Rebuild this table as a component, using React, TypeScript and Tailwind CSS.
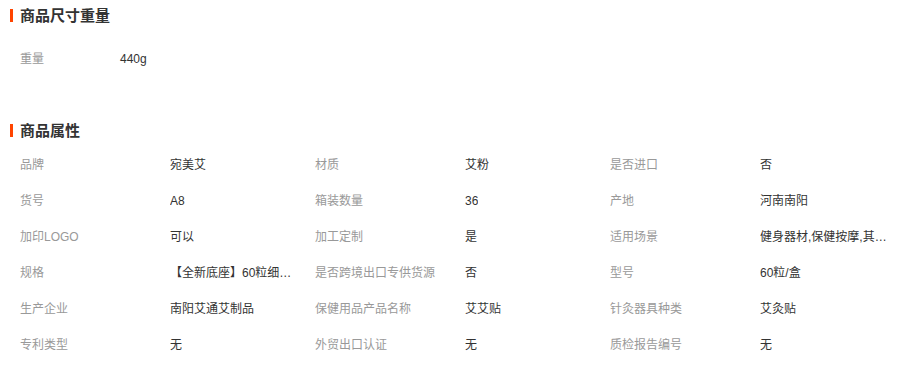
const SIZE_ROWS: [string, string][] = [["重量", "440g"]];

const ATTRS: [string, string][] = [
  ["品牌", "宛美艾"],
  ["材质", "艾粉"],
  ["是否进口", "否"],
  ["货号", "A8"],
  ["箱装数量", "36"],
  ["产地", "河南南阳"],
  ["加印LOGO", "可以"],
  ["加工定制", "是"],
  ["适用场景", "健身器材,保健按摩,其他场景"],
  ["规格", "【全新底座】60粒细艾绒"],
  ["是否跨境出口专供货源", "否"],
  ["型号", "60粒/盒"],
  ["生产企业", "南阳艾通艾制品"],
  ["保健用品产品名称", "艾艾贴"],
  ["针灸器具种类", "艾灸贴"],
  ["专利类型", "无"],
  ["外贸出口认证", "无"],
  ["质检报告编号", "无"],
];

function SectionTitle({ title }: { title: string }) {
  return (
    <div className="flex h-[30px] items-center">
      <span className="ml-[10px] h-[13px] w-[3px] bg-[#ff4400]" />
      <h3 className="ml-[7px] text-[15px] font-bold leading-none text-[#333]">{title}</h3>
    </div>
  );
}

export default function App() {
  return (
    <div
      className="h-[371px] w-[898px] overflow-hidden bg-white text-[12px]"
      style={{ fontFamily: '"Liberation Sans", "Noto Sans CJK SC", sans-serif' }}
    >
      <SectionTitle title="商品尺寸重量" />
      <div className="pl-5 pt-[11px]">
        {SIZE_ROWS.map(([label, value]) => (
          <div key={label} className="flex h-9 items-center">
            <span className="w-[100px] text-[#999]">{label}</span>
            <span className="text-[#333]">{value}</span>
          </div>
        ))}
      </div>

      <div className="mt-[38px]">
        <SectionTitle title="商品属性" />
        <div className="grid grid-cols-[150px_145px_150px_145px_150px_1fr] pl-5 pt-[2px]">
          {ATTRS.map(([label, value]) => (
            <div key={label} className="contents">
              <div className="flex h-9 items-center whitespace-nowrap text-[#999]">{label}</div>
              <div className="flex h-9 items-center">
                <span className="block max-w-[128px] truncate text-[#333]">{value}</span>
              </div>
            </div>
          ))}
        </div>
      </div>
    </div>
  );
}
